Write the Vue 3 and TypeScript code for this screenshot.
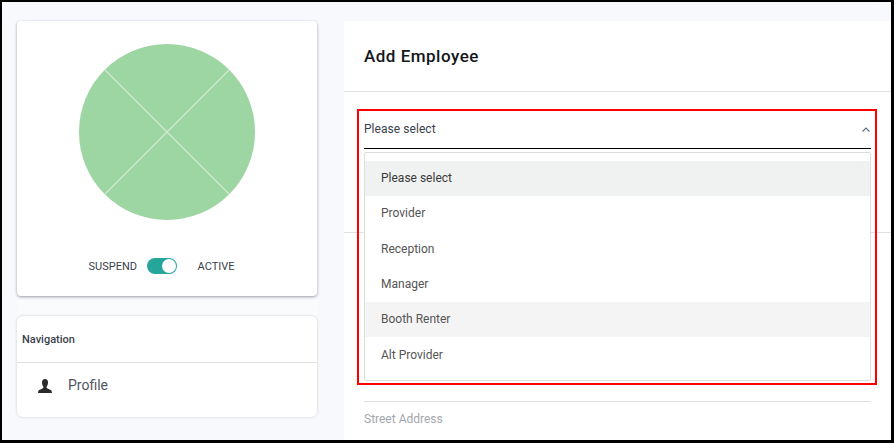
<script setup lang="ts">
const roles = ['Please select', 'Provider', 'Reception', 'Manager', 'Booth Renter', 'Alt Provider'];
</script>

<template>
  <div class="frame">
    <aside class="side">
      <section class="card status-card">
        <svg class="avatar" width="176" height="176" viewBox="0 0 176 176">
          <circle cx="88" cy="88" r="88" fill="#9dd5a3" />
          <path d="M26 26 150 150M150 26 26 150" stroke="#d4ead2" stroke-width="1.2" />
        </svg>
        <div class="status-row">
          <span>SUSPEND</span>
          <span class="toggle"><i></i></span>
          <span class="active-label">ACTIVE</span>
        </div>
      </section>
      <section class="card nav-card">
        <h3>Navigation</h3>
        <a class="nav-item">
          <svg width="14" height="14" viewBox="0 0 14 14">
            <path d="M7 0C9 0 10 1.500 10 3.500 10 5.500 9.200 7 8.600 7.800 8.400 8.700 9 9.400 10.500 10 12 10.600 14 11 14 14H0C0 11 2 10.600 3.500 10 5 9.400 5.600 8.700 5.400 7.800 4.800 7 4 5.500 4 3.500 4 1.500 5 0 7 0Z" fill="#2b2b2b" />
          </svg>
          <span>Profile</span>
        </a>
      </section>
    </aside>

    <main class="panel">
      <header class="panel-head">Add Employee</header>
      <div class="form">
        <div class="select-wrap">
          <div class="select-trigger">
            <span>Please select</span>
            <svg width="8" height="5" viewBox="0 0 8 5">
              <path d="M.5 4.500 4 1l3.500 3.500" fill="none" stroke="#5c6f7d" stroke-width="1.100" />
            </svg>
          </div>
          <ul class="menu">
            <li
              v-for="(role, i) in roles"
              :key="role"
              :class="{ selected: i === 0, hovered: i === 4 }"
            >
              {{ role }}
            </li>
          </ul>
          <div class="highlight"></div>
        </div>
        <div class="hidden-field"></div>
        <div class="address">Street Address</div>
      </div>
    </main>
  </div>
</template>

<style>
html,
body {
  margin: 0;
  background: #000;
}
</style>

<style scoped>
.frame {
  box-sizing: border-box;
  width: 894px;
  height: 443px;
  overflow: hidden;
  display: flex;
  align-items: flex-start;
  gap: 27px;
  padding: 19px 0 0 15px;
  border: solid #000;
  border-width: 2px 3px 3px 2px;
  background: #f8f9fd;
  font-family: Roboto, "Liberation Sans", sans-serif;
  color: #3a3f4b;
}

.side {
  width: 300px;
  display: flex;
  flex-direction: column;
  gap: 20px;
  background: #fafbfd;
}

.card {
  background: #fff;
  border-radius: 4px;
}

.status-card {
  height: 275px;
  box-sizing: border-box;
  padding-top: 23px;
  display: flex;
  flex-direction: column;
  align-items: center;
  box-shadow: 0 1px 3px rgba(40, 40, 60, 0.45);
}

.status-row {
  margin-top: 38px;
  margin-right: 11px;
  display: flex;
  align-items: center;
  font-size: 11px;
  height: 16px;
  width: 146px;
}

.toggle {
  box-sizing: border-box;
  width: 30px;
  height: 16px;
  margin: 0 21px 0 10px;
  padding: 1px;
  border-radius: 8px;
  background: #26a69a;
  display: flex;
  justify-content: flex-end;
}

.toggle i {
  width: 14px;
  height: 14px;
  border-radius: 50%;
  background: #fff;
}

.nav-card {
  height: 101px;
  border-radius: 6px;
  box-shadow: 0 0 3px rgba(40, 40, 60, 0.2);
}

.nav-card h3 {
  margin: 0;
  height: 46px;
  padding-left: 5px;
  display: flex;
  align-items: center;
  font-size: 11px;
  font-weight: 500;
  border-bottom: 1px solid #e0e0e0;
}

.nav-item {
  display: flex;
  align-items: center;
  gap: 16px;
  padding: 14px 0 0 21px;
  font-size: 14px;
  color: #50555f;
}

.nav-item svg {
  margin-top: 1px;
}

.panel {
  width: 547px;
  height: 420px;
  background: #fff;
}

.panel-head {
  height: 71px;
  box-sizing: border-box;
  padding-left: 20px;
  display: flex;
  align-items: center;
  border-bottom: 1px solid #e0e0e0;
  font-size: 17px;
  font-weight: 500;
  letter-spacing: 0.5px;
  color: #14161c;
}

.form {
  padding-top: 17px;
}

.select-wrap {
  position: relative;
  margin: 0 20px;
}

.select-trigger {
  height: 40px;
  box-sizing: border-box;
  padding-right: 1px;
  display: flex;
  align-items: center;
  justify-content: space-between;
  border-bottom: 1px solid #000;
  font-size: 12px;
  letter-spacing: 0.05px;
}

.select-trigger svg {
  margin-top: 2px;
}

.menu {
  position: absolute;
  top: 43px;
  left: 0;
  right: 0;
  margin: 0;
  padding: 8px 0;
  box-sizing: border-box;
  height: 229px;
  list-style: none;
  background: #fff;
  border: 1px solid #ddd;
  border-radius: 2px;
  font-size: 12px;
  color: #555;
  z-index: 1;
}

.menu li {
  height: 35.3px;
  box-sizing: border-box;
  display: flex;
  align-items: center;
  padding: 0 0 1px 16px;
}

.menu .selected {
  background: #f0f2f1;
  color: #3a3a3a;
}

.menu .hovered {
  background: #f4f4f4;
}

.highlight {
  position: absolute;
  top: 0;
  left: -7px;
  right: -6px;
  height: 276px;
  box-sizing: border-box;
  border: 2px solid #f00;
  z-index: 2;
  pointer-events: none;
}

.hidden-field {
  height: 83px;
  border-bottom: 1px solid #e0e0e0;
}

.address {
  margin: 168px 20px 0;
  padding-top: 10px;
  border-top: 1px solid #e0e0e0;
  font-size: 12px;
  color: #a3a7ad;
}
</style>
